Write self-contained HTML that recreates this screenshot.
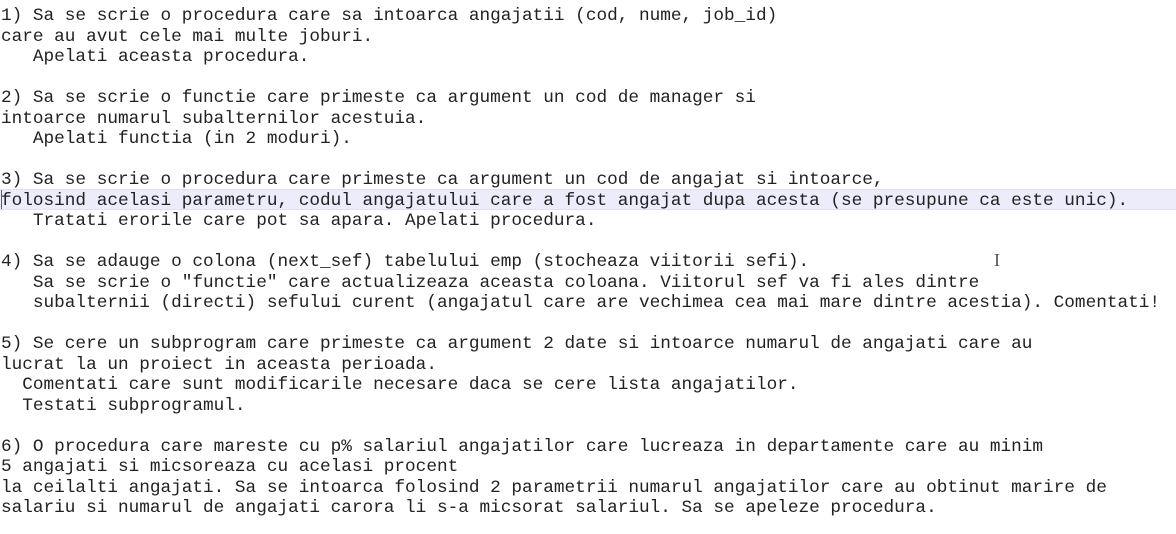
<!DOCTYPE html>
<html><head><meta charset="utf-8"><style>
html,body{margin:0;padding:0;background:#fff;width:1176px;height:534px;overflow:hidden}
pre{margin:0;position:absolute;top:6px;left:1px;font-family:"Liberation Mono",monospace;font-size:17.73px;line-height:20.5px;color:#222;}
.hl{position:absolute;left:0;top:189px;width:1176px;height:21px;background:#ececfa;border-top:1px solid #e0e0f0;border-bottom:1px solid #e0e0f0;box-sizing:border-box}
.caret{position:absolute;left:1px;top:190px;width:1px;height:19px;background:#8040a0}
.cur{position:absolute;left:994px;top:250px;font-family:"Liberation Serif",serif;font-size:18px;color:#555}
</style></head><body>
<div class="hl"></div><div class="caret"></div>
<pre>1) Sa se scrie o procedura care sa intoarca angajatii (cod, nume, job_id)
care au avut cele mai multe joburi.
   Apelati aceasta procedura.

2) Sa se scrie o functie care primeste ca argument un cod de manager si
intoarce numarul subalternilor acestuia.
   Apelati functia (in 2 moduri).

3) Sa se scrie o procedura care primeste ca argument un cod de angajat si intoarce,
folosind acelasi parametru, codul angajatului care a fost angajat dupa acesta (se presupune ca este unic).
   Tratati erorile care pot sa apara. Apelati procedura.

4) Sa se adauge o colona (next_sef) tabelului emp (stocheaza viitorii sefi).
   Sa se scrie o "functie" care actualizeaza aceasta coloana. Viitorul sef va fi ales dintre
   subalternii (directi) sefului curent (angajatul care are vechimea cea mai mare dintre acestia). Comentati!

5) Se cere un subprogram care primeste ca argument 2 date si intoarce numarul de angajati care au
lucrat la un proiect in aceasta perioada.
  Comentati care sunt modificarile necesare daca se cere lista angajatilor.
  Testati subprogramul.

6) O procedura care mareste cu p% salariul angajatilor care lucreaza in departamente care au minim
5 angajati si micsoreaza cu acelasi procent
la ceilalti angajati. Sa se intoarca folosind 2 parametrii numarul angajatilor care au obtinut marire de
salariu si numarul de angajati carora li s-a micsorat salariul. Sa se apeleze procedura.</pre>
<div class="cur">I</div>
</body></html>
